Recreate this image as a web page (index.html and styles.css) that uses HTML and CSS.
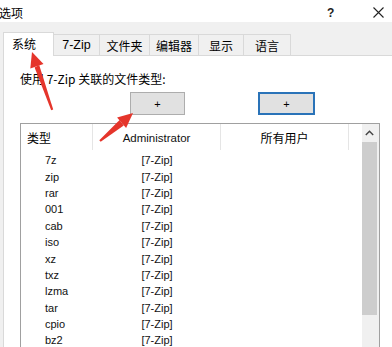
FILE: index.html
```html
<!DOCTYPE html>
<html lang="zh">
<head>
<meta charset="utf-8">
<title>选项</title>
<link rel="stylesheet" href="styles.css">
</head>
<body>
<div class="window">
  <div class="titlebar">
    <span class="title">选项</span>
    <span class="help">?</span>
    <span class="close"><svg width="11" height="11" viewBox="0 0 11 11"><path d="M0.5 0.5L10.5 10.5M10.5 0.5L0.5 10.5" stroke="#222" stroke-width="1.1" fill="none"/></svg></span>
  </div>
  <div class="tabstrip">
    <div class="tab active">系统</div>
    <div class="tab t-zip">7-Zip</div>
    <div class="tab t-folder">文件夹</div>
    <div class="tab t-editor">编辑器</div>
    <div class="tab t-show">显示</div>
    <div class="tab t-lang">语言</div>
  </div>
  <div class="panel">
    <div class="label">使用 7-Zip 关联的文件类型:</div>
    <div class="buttons">
      <button class="btn">+</button>
      <button class="btn focused">+</button>
    </div>
    <div class="list">
      <div class="list-main">
        <div class="header">
          <div class="col c1 h-left">类型</div>
          <div class="col c2 h-center">Administrator</div>
          <div class="col c3 h-center">所有用户</div>
          <div class="col c4"></div>
        </div>
        <div class="rows">
          <div class="row"><span class="c1 cell1">7z</span><span class="c2 cell2">[7-Zip]</span></div>
          <div class="row"><span class="c1 cell1">zip</span><span class="c2 cell2">[7-Zip]</span></div>
          <div class="row"><span class="c1 cell1">rar</span><span class="c2 cell2">[7-Zip]</span></div>
          <div class="row"><span class="c1 cell1">001</span><span class="c2 cell2">[7-Zip]</span></div>
          <div class="row"><span class="c1 cell1">cab</span><span class="c2 cell2">[7-Zip]</span></div>
          <div class="row"><span class="c1 cell1">iso</span><span class="c2 cell2">[7-Zip]</span></div>
          <div class="row"><span class="c1 cell1">xz</span><span class="c2 cell2">[7-Zip]</span></div>
          <div class="row"><span class="c1 cell1">txz</span><span class="c2 cell2">[7-Zip]</span></div>
          <div class="row"><span class="c1 cell1">lzma</span><span class="c2 cell2">[7-Zip]</span></div>
          <div class="row"><span class="c1 cell1">tar</span><span class="c2 cell2">[7-Zip]</span></div>
          <div class="row"><span class="c1 cell1">cpio</span><span class="c2 cell2">[7-Zip]</span></div>
          <div class="row"><span class="c1 cell1">bz2</span><span class="c2 cell2">[7-Zip]</span></div>
        </div>
      </div>
      <div class="scrollbar">
        <div class="sb-up"><svg width="9" height="6" viewBox="0 0 9 6"><path d="M0.8 5L4.5 1.3L8.2 5" stroke="#444" stroke-width="1.4" fill="none"/></svg></div>
        <div class="sb-thumb"></div>
      </div>
    </div>
  </div>
  <svg class="annot" width="392" height="347" viewBox="0 0 392 347">
    <polygon fill="#e5352b" points="51.2,110.3 53.2,109.6 39.2,64.9 34.6,67.4"/>
    <polygon fill="#e5352b" points="32,52 43.5,63.9 30.3,68.5"/>
    <polygon fill="#e5352b" points="99.3,140.2 100.7,141.8 123.7,125.6 119.6,120.0"/>
    <polygon fill="#e5352b" points="133,113 126.1,128 117.1,117.4"/>
  </svg>
</div>
</body>
</html>
```

FILE: styles.css
```css
* { box-sizing: border-box; }
html, body { margin: 0; padding: 0; }
body {
  width: 392px;
  height: 347px;
  overflow: hidden;
  background: #ffffff;
  font-family: "Noto Sans CJK SC", "Liberation Sans", sans-serif;
  color: #000;
}
.window {
  position: relative;
  width: 392px;
  height: 347px;
  overflow: hidden;
  display: flex;
  flex-direction: column;
  background: #f0f0f0;
}
.titlebar {
  height: 22px;
  flex: none;
  background: #ffffff;
  display: flex;
  align-items: center;
  font-size: 12px;
}
.title {
  margin-left: -1px;
  line-height: 16px;
  padding-top: 3px;
}
.help {
  margin-left: auto;
  font-family: "Liberation Sans", sans-serif;
  font-size: 12px;
  font-weight: bold;
  color: #222;
  padding-top: 3px;
  width: 10px;
}
.close {
  display: flex;
  margin-left: 36px;
  margin-right: 8px;
  padding-top: 2px;
}
.tabstrip {
  height: 33px;
  flex: none;
  display: flex;
  align-items: flex-end;
  padding-left: 3px;
  position: relative;
  z-index: 2;
}
.tab {
  height: 21px;
  border: 1px solid #d9d9d9;
  border-bottom: none;
  border-left: none;
  background: #f0f0f0;
  font-size: 12px;
  line-height: 19px;
  display: flex;
  justify-content: center;
  align-items: center;
  padding-top: 1px;
}
.tab.active {
  width: 51px;
  height: 24px;
  margin-bottom: -1px;
  background: #ffffff;
  border-left: 1px solid #d9d9d9;
  padding-top: 0;
  padding-bottom: 2px;
  justify-content: flex-start;
  padding-left: 8px;
}
.t-zip { width: 46px; font-family: "Liberation Sans", sans-serif; font-size: 12.5px; }
.t-folder { width: 50px; }
.t-editor { width: 49px; }
.t-show { width: 45px; }
.t-lang { width: 47px; }
.panel {
  flex: 1;
  margin-left: 3px;
  background: #ffffff;
  border-top: 1px solid #d9d9d9;
  border-left: 1px solid #d9d9d9;
  padding-left: 16px;
  padding-top: 15px;
  display: flex;
  flex-direction: column;
}
.label {
  font-size: 12px;
  line-height: 16px;
  height: 16px;
}
.buttons {
  margin-top: 5px;
  display: flex;
  height: 23px;
  padding-left: 110px;
  gap: 73px;
}
.btn {
  width: 55px;
  height: 23px;
  margin: 0;
  padding: 0;
  background: #e1e1e1;
  border: 1px solid #adadad;
  font-family: "Liberation Sans", sans-serif;
  font-size: 11px;
  color: #000;
  line-height: 18px;
}
.btn.focused {
  width: 57px;
  border: 2px solid #2a73b8;
}
.list {
  margin-top: 8px;
  width: 360px;
  height: 240px;
  border: 1px solid #a0a0a0;
  display: flex;
}
.list-main {
  flex: 1;
  display: flex;
  flex-direction: column;
}
.header {
  height: 26px;
  display: flex;
  font-size: 12px;
}
.col {
  display: flex;
  align-items: center;
  border-right: 1px solid #e5e5e5;
  height: 26px;
  padding-top: 1px;
}
.header .c1 { width: 72px; }
.header .c2 { width: 128px; }
.header .c3 { width: 128px; }
.header .c4 { flex: 1; border-right: none; }
.h-left { padding-left: 6px; }
.h-center { justify-content: center; }
.header .c2 { font-family: "Liberation Sans", sans-serif; font-size: 11.5px; color: #111; }
.rows {
  padding-top: 2px;
  font-family: "Liberation Sans", sans-serif;
  font-size: 11px;
  color: #111;
}
.row {
  height: 16.4px;
  display: flex;
  align-items: center;
}
.cell1 {
  width: 72px;
  padding-left: 24px;
}
.cell2 {
  width: 128px;
  text-align: center;
}
.scrollbar {
  width: 17px;
  flex: none;
  background: #f0f0f0;
  display: flex;
  flex-direction: column;
}
.sb-up {
  height: 18px;
  display: flex;
  align-items: center;
  justify-content: center;
  padding-right: 2px;
  background: #f0f0f0;
}
.sb-thumb {
  width: 15px;
  height: 173px;
  background: #cdcdcd;
}
.annot {
  position: absolute;
  left: 0;
  top: 0;
  z-index: 10;
  pointer-events: none;
}
```
